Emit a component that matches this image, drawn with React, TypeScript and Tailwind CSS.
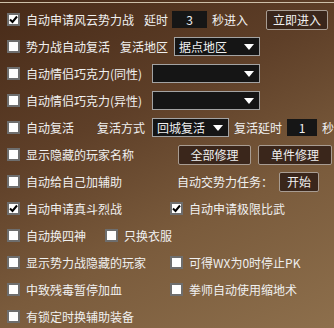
import React from 'react';

function Box({ checked = false }: { checked?: boolean }) {
  return (
    <span className="flex h-[13px] w-[13px] shrink-0 items-center justify-center border-2 border-[#6e6e6e] bg-white">
      {checked && (
        <svg width="9" height="9" viewBox="0 0 9 9">
          <path d="M1 4.5 L3.5 7 L8 1.5" fill="none" stroke="#000" strokeWidth="2" />
        </svg>
      )}
    </span>
  );
}

function Check({ label, checked, className = '' }: { label: string; checked?: boolean; className?: string }) {
  return (
    <div className={`flex shrink-0 items-center gap-[6px] ${className}`}>
      <Box checked={checked} />
      <span>{label}</span>
    </div>
  );
}

function Select({ value = '', className = '' }: { value?: string; className?: string }) {
  return (
    <div className={`flex h-[19px] shrink-0 items-center justify-between border border-[#a3a3a3] bg-[#151515] pl-[4px] pr-[5px] ${className}`}>
      <span>{value}</span>
      <svg width="10" height="6" viewBox="0 0 10 6">
        <path d="M0 0 H10 L5 6 Z" fill="#fff" />
      </svg>
    </div>
  );
}

function Field({ value, className = '' }: { value: string; className?: string }) {
  return (
    <div className={`flex h-[17px] shrink-0 items-center justify-center bg-[#161616] ${className}`}>
      {value}
    </div>
  );
}

function Btn({ label, className = '' }: { label: string; className?: string }) {
  return (
    <div className={`flex h-[20px] shrink-0 items-center justify-center rounded-[2px] border border-[#a89c92] bg-[#3a261b] ${className}`}>
      {label}
    </div>
  );
}

function Row({ children }: { children: React.ReactNode }) {
  return <div className="flex h-[27px] items-center pl-[7px]">{children}</div>;
}

export default function App() {
  return (
    <div className="h-[328px] w-[334px] overflow-hidden bg-[linear-gradient(155deg,#472a18_0%,#5e3f28_35%,#7a5b3c_65%,#8d6f4c_100%)] pt-[2px] font-['Noto_Sans_CJK_SC',sans-serif] text-[12px] leading-none text-[#f0f0f0]">
      <div className="h-[1px] bg-[#cdbfa8]" />
      <div className="pt-[3px]">
        <Row>
          <Check label="自动申请风云势力战" checked className="w-[137px]" />
          <span>延时</span>
          <Field value="3" className="ml-[4px] w-[35px]" />
          <span className="ml-[5px]">秒进入</span>
          <Btn label="立即进入" className="ml-auto mr-[6px] h-[19px] w-[62px]" />
        </Row>
        <Row>
          <Check label="势力战自动复活" className="w-[113px]" />
          <span>复活地区</span>
          <Select value="据点地区" className="ml-[6px] w-[86px]" />
        </Row>
        <Row>
          <Check label="自动情侣巧克力(同性)" className="w-[145px]" />
          <Select className="w-[108px]" />
        </Row>
        <Row>
          <Check label="自动情侣巧克力(异性)" className="w-[145px]" />
          <Select className="w-[108px]" />
        </Row>
        <Row>
          <Check label="自动复活" className="w-[90px]" />
          <span>复活方式</span>
          <Select value="回城复活" className="ml-[7px] w-[77px]" />
          <span className="ml-[5px]">复活延时</span>
          <Field value="1" className="ml-[5px] w-[30px]" />
          <span className="ml-[5px]">秒</span>
        </Row>
        <Row>
          <Check label="显示隐藏的玩家名称" className="w-[171px]" />
          <Btn label="全部修理" className="w-[73px]" />
          <Btn label="单件修理" className="ml-[7px] w-[74px]" />
        </Row>
        <Row>
          <Check label="自动给自己加辅助" className="w-[170px]" />
          <span>自动交势力任务：</span>
          <Btn label="开始" className="ml-[6px] w-[40px]" />
        </Row>
        <Row>
          <Check label="自动申请真斗烈战" checked className="w-[163px]" />
          <Check label="自动申请极限比武" checked />
        </Row>
        <Row>
          <Check label="自动换四神" className="w-[98px]" />
          <Check label="只换衣服" />
        </Row>
        <Row>
          <Check label="显示势力战隐藏的玩家" className="w-[163px]" />
          <Check label="可得WX为0时停止PK" />
        </Row>
        <Row>
          <Check label="中致残毒暂停加血" className="w-[163px]" />
          <Check label="拳师自动使用缩地术" />
        </Row>
        <Row>
          <Check label="有锁定时换辅助装备" />
        </Row>
      </div>
    </div>
  );
}
